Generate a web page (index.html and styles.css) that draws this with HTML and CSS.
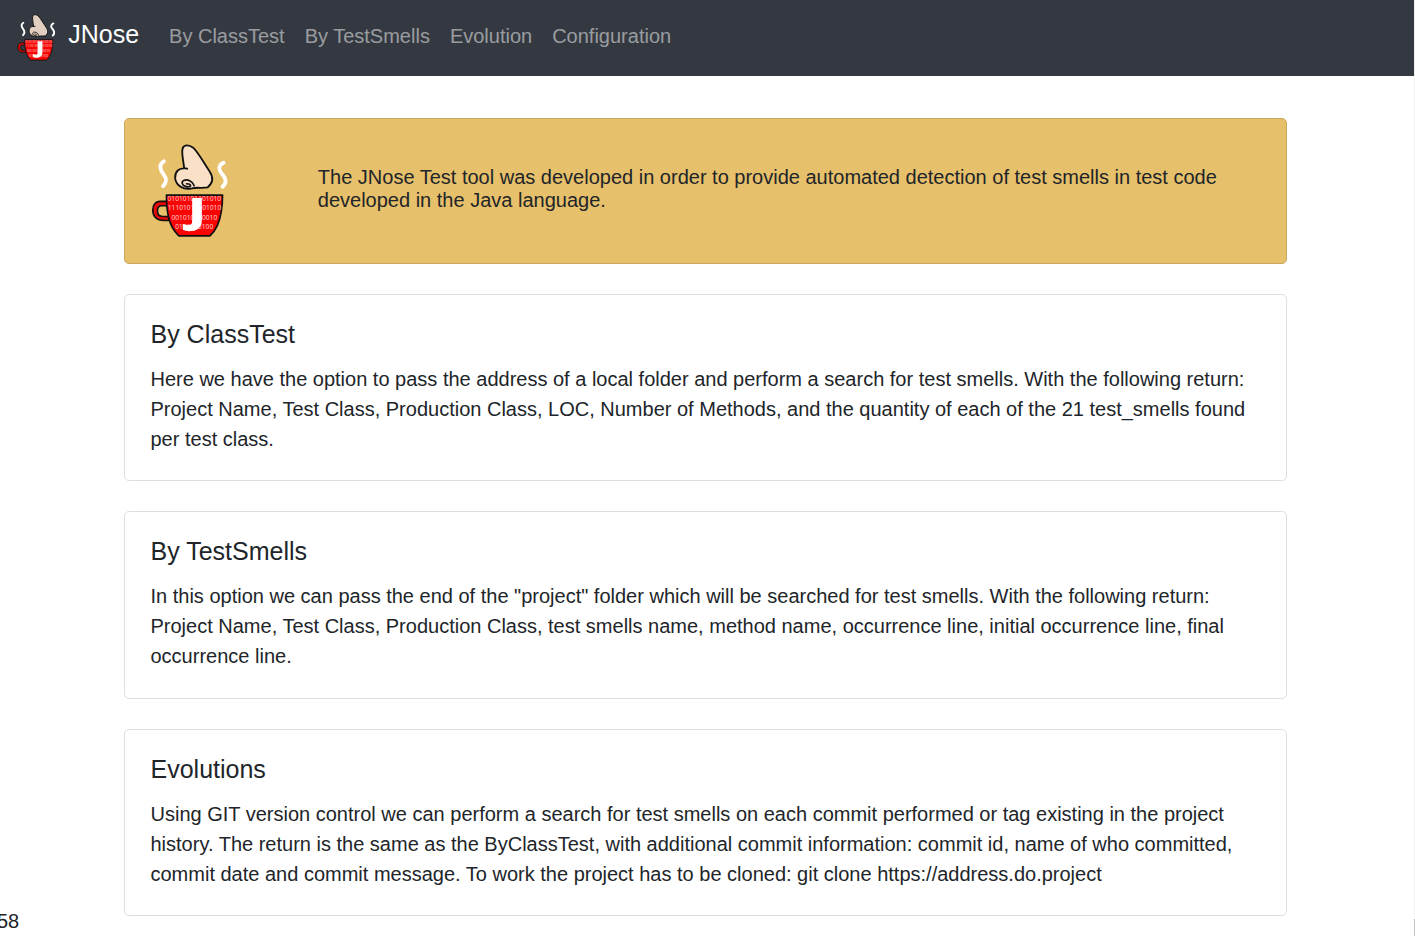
FILE: index.html
```html
<!DOCTYPE html>
<html lang="en">
<head>
<meta charset="utf-8">
<title>JNose</title>
<link rel="stylesheet" href="styles.css">
</head>
<body>
<svg class="defs" width="0" height="0" aria-hidden="true">
  <symbol id="logo" viewBox="18 28 230 280">
    <g fill="none" stroke="#fff" stroke-width="11.5" stroke-linecap="round">
      <path d="M56 80C41 89 44 103 54 117C66 132 66 142 54 154"/>
      <path d="M235 84C218 92 220 106 230 117C244 134 245 144 232 156"/>
    </g>
    <path class="skin" stroke="#111" stroke-width="5.5" stroke-linejoin="round" stroke-linecap="round" d="M126 102L117 100C115 80 109 57 112 43C115 29 131 29 144 39C160 54 177 87 192 108C205 127 206 143 187 158C170 161 153 157 140 161C116 167 93 153 90 131C89 111 100 100 118 101"/>
    <path fill="none" stroke="#111" stroke-width="5" stroke-linecap="round" d="M147 153C142 138 127 133 116 137C107 141 111 152 121 155C132 159 140 154 134 149C131 147 127 147 124 147"/>
    <path fill="#e90808" stroke="#111" stroke-width="5" fill-rule="evenodd" d="M66 200H45C30 200 23 212 23 226C23 245 35 257 55 257H73L69 245H53C41 245 37 237 37 228C37 218 42 213 50 213H66Z"/>
    <path fill="#f90303" stroke="#111" stroke-width="5" stroke-linejoin="round" d="M64 181H232C232 215 228 247 216 273C209 288 202 296 194 303H101C84 287 75 269 70 246C65 226 64 204 64 181Z"/>
    <g class="bits">
      <text x="67" y="199" textLength="161" lengthAdjust="spacingAndGlyphs">01010101101010</text>
      <text x="68" y="227" textLength="160" lengthAdjust="spacingAndGlyphs">11101010101010</text>
      <text x="79" y="255" textLength="137" lengthAdjust="spacingAndGlyphs">001010110010</text>
      <text x="90" y="282" textLength="114" lengthAdjust="spacingAndGlyphs">0101010100</text>
    </g>
    <path fill="#fff" d="M141 190H170V256C170 279 155 289 132 289C124 289 118 287 113 285V267C119 270 124 271 129 271C138 271 141 267 141 257Z"/>
  </symbol>
</svg>
<div class="window">
  <div class="page">
    <nav class="navbar">
      <a class="brand"><svg class="brand-logo"><use href="#logo"/></svg><span>JNose</span></a>
      <a class="nav-link">By ClassTest</a>
      <a class="nav-link">By TestSmells</a>
      <a class="nav-link">Evolution</a>
      <a class="nav-link">Configuration</a>
    </nav>
    <main class="container">
      <section class="card intro">
        <svg class="intro-logo"><use href="#logo"/></svg>
        <p class="intro-text">The JNose Test tool was developed in order to provide automated detection of test smells in test code<br>developed in the Java language.</p>
      </section>
      <section class="card">
        <h5 class="card-title">By ClassTest</h5>
        <p class="card-text">Here we have the option to pass the address of a local folder and perform a search for test smells. With the following return:<br>Project Name, Test Class, Production Class, LOC, Number of Methods, and the quantity of each of the 21 test_smells found<br>per test class.</p>
      </section>
      <section class="card">
        <h5 class="card-title">By TestSmells</h5>
        <p class="card-text">In this option we can pass the end of the "project" folder which will be searched for test smells. With the following return:<br>Project Name, Test Class, Production Class, test smells name, method name, occurrence line, initial occurrence line, final<br>occurrence line.</p>
      </section>
      <section class="card">
        <h5 class="card-title">Evolutions</h5>
        <p class="card-text">Using GIT version control we can perform a search for test smells on each commit performed or tag existing in the project<br>history. The return is the same as the ByClassTest, with additional commit information: commit id, name of who committed,<br>commit date and commit message. To work the project has to be cloned: git clone https://address.do.project</p>
      </section>
    </main>
    <span class="counter">58</span>
  </div>
  <div class="scroll-track"><div class="scroll-thumb"></div></div>
</div>
</body>
</html>
```

FILE: styles.css
```css
* { box-sizing: border-box; }
body {
  margin: 0;
  overflow: hidden;
  background: #fff;
  color: #212529;
  font: 20px/30px "Liberation Sans", Arial, sans-serif;
}
.defs { position: absolute; }
.window {
  display: grid;
  grid-template-columns: 1fr 1px;
  height: 936px;
}
.page {
  position: relative;
  overflow: hidden;
}
.navbar {
  display: flex;
  align-items: flex-start;
  height: 76px;
  padding-left: 16.7px;
  background: #343941;
}
.brand {
  display: flex;
  gap: 13px;
  margin-right: 20px;
  padding-top: 13.5px;
  color: #fff;
  font-size: 25px;
  line-height: 41px;
}
.brand-logo {
  width: 38.5px;
  height: 47px;
  --skin: #e2cec0;
}
.skin { fill: var(--skin, #fbe0c8); }
.bits {
  fill: #fff;
  opacity: .8;
  font: 19px "Open Sans", sans-serif;
}
.nav-link {
  padding: 21px 10px 0;
  color: rgba(255, 255, 255, .5);
}
.container {
  display: flex;
  flex-direction: column;
  gap: 30px;
  width: 1163px;
  margin: 42px 0 0 124px;
}
.card {
  height: 187.4px;
  padding: 24px 25.5px;
  border: 1px solid #dfdfdf;
  border-radius: 5px;
}
.intro {
  display: flex;
  height: 146px;
  padding-top: 25px;
  border-color: #c9a75c;
  background: #e7c06b;
}
.intro-logo {
  width: 77px;
  height: 93.5px;
}
.intro-text {
  margin: 22px 0 0 90.3px;
  line-height: 23px;
  white-space: nowrap;
}
.card-title {
  margin: 0 0 15px;
  font-size: 25px;
  font-weight: 400;
  line-height: 30px;
}
.card-text {
  margin: 0;
  white-space: nowrap;
}
.counter {
  position: absolute;
  left: -3px;
  bottom: 0;
}
.scroll-track {
  display: flex;
  align-items: flex-end;
  background: #f1f1f1;
}
.scroll-thumb {
  width: 1px;
  height: 17px;
  background: #c1c1c1;
}
```
